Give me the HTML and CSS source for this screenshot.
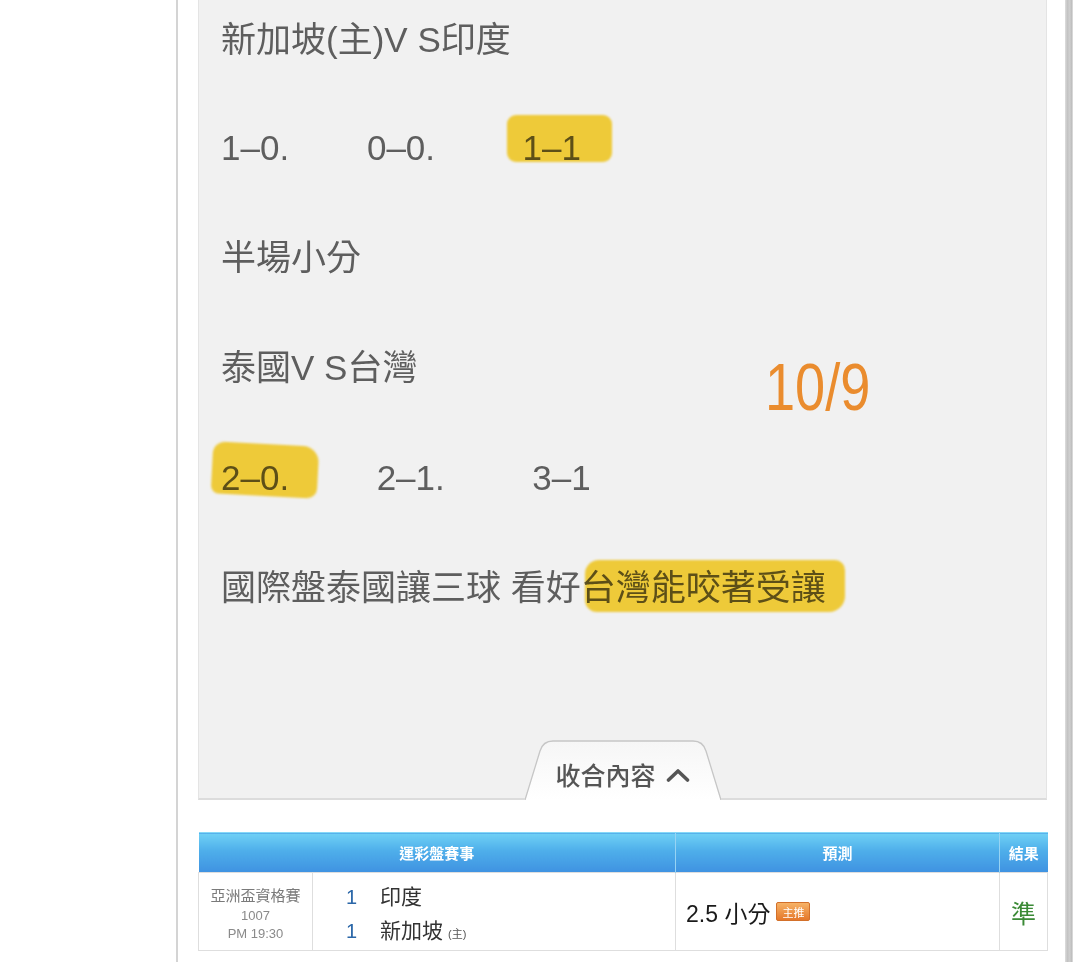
FILE: index.html
```html
<!DOCTYPE html>
<html lang="zh-Hant">
<head>
<meta charset="utf-8">
<title>賽事預測</title>
<link rel="stylesheet" href="styles.css">
</head>
<body>
<div class="frame">
  <main class="main">
    <article class="post">
      <p class="line">新加坡(主)V S印度</p>
      <p class="line scores">1–0.        0–0.         <span class="hl hl-a">1–1</span></p>
      <p class="line">半場小分</p>
      <p class="line">泰國V S台灣</p>
      <p class="line scores"><span class="hl hl-b">2–0.</span>         2–1.         3–1</p>
      <p class="line">國際盤泰國讓三球 看好<span class="hl hl-c">台灣能咬著受讓</span></p>
      <span class="note">10/9</span>
      <div class="post-foot">
        <button class="toggle" type="button">
          <svg class="tab-shape" viewBox="0 0 196 60" width="196" height="60" aria-hidden="true">
            <defs>
              <linearGradient id="tabfill" x1="0" y1="0" x2="0" y2="1">
                <stop offset="0" stop-color="#f6f6f6"/>
                <stop offset="1" stop-color="#ffffff"/>
              </linearGradient>
            </defs>
            <path d="M0 60 L15 11 Q18 1 28 1 L168 1 Q178 1 181 11 L196 60 Z" fill="url(#tabfill)"/>
            <path d="M0 60 L15 11 Q18 1 28 1 L168 1 Q178 1 181 11 L196 60" fill="none" stroke="#c6c6c6" stroke-width="1.3"/>
          </svg>
          <span class="toggle-label">收合內容</span>
          <svg class="chev" viewBox="0 0 24 14" width="24" height="14" aria-hidden="true">
            <polyline points="2.5,12 12,3 21.5,12" fill="none" stroke="#555" stroke-width="3.6" stroke-linecap="round" stroke-linejoin="round"/>
          </svg>
        </button>
      </div>
    </article>

    <table class="picks">
      <colgroup>
        <col class="c-league"><col class="c-teams"><col class="c-pred"><col class="c-res">
      </colgroup>
      <thead>
        <tr>
          <th colspan="2">運彩盤賽事</th>
          <th>預測</th>
          <th>結果</th>
        </tr>
      </thead>
      <tbody>
        <tr>
          <td class="league">
            <div class="lg-name">亞洲盃資格賽</div>
            <div class="lg-meta">1007</div>
            <div class="lg-meta">PM 19:30</div>
          </td>
          <td class="teams">
            <div class="team"><span class="num">1</span><span class="tname">印度</span></div>
            <div class="team"><span class="num">1</span><span class="tname">新加坡</span><span class="home">(主)</span></div>
          </td>
          <td class="pred">
            <span class="pred-text">2.5 小分</span><span class="badge">主推</span>
          </td>
          <td class="res">準</td>
        </tr>
      </tbody>
    </table>
  </main>
  <div class="scroll-edge"></div>
</div>
</body>
</html>
```

FILE: styles.css
```css
* { box-sizing: border-box; }

html, body {
  margin: 0;
  padding: 0;
  background: #ffffff;
}

body {
  font-family: "Liberation Sans", "Noto Sans CJK TC", sans-serif;
  color: #5e5e5e;
}

.frame {
  display: flex;
  margin-left: 176px;
  min-height: 962px;
}

.main {
  width: 889px;
  border-left: 2px solid #d4d4d4;
  padding: 0 18px 0 20px;
}

.scroll-edge {
  width: 8px;
  background: linear-gradient(to right, #dedede, #c3c3c3 30%, #cfcfcf 60%, #bfbfbf 82%, #e4e4e4);
}

/* ---------- article box ---------- */
.post {
  position: relative;
  display: flex;
  flex-direction: column;
  gap: 70px;
  background: #f1f1f1;
  border-left: 1px solid #e4e4e4;
  border-right: 1px solid #e4e4e4;
  border-bottom: 2px solid #dcdcdc;
  padding: 20px 0 0 22px;
}

.line {
  margin: 0;
  height: 40px;
  line-height: 40px;
  font-size: 35px;
  color: #5e5e5e;
  white-space: pre;
}

.line:first-child {
  margin-bottom: -2px;
}

.hl {
  position: relative;
  display: inline-block;
  line-height: 40px;
  height: 40px;
}

.hl::before {
  content: "";
  position: absolute;
  background: #fcd63c;
  mix-blend-mode: multiply;
  border-radius: 9px;
  filter: blur(0.8px);
  z-index: 1;
}

.hl-a::before { left: -16px; right: -31px; top: -13px; height: 47px; }
.hl-b::before { left: -9px; right: -29px; top: -14px; height: 52px; transform: rotate(3deg); border-radius: 12px 16px 10px 8px; }
.hl-c::before { left: 4px; right: -19px; top: -8px; height: 52px; border-radius: 14px 10px 16px 12px; }

.note {
  position: absolute;
  left: 566px;
  top: 354px;
  font-size: 66px;
  line-height: 1;
  color: #ea8c2e;
  transform: scaleX(0.82);
  transform-origin: left top;
}

.post-foot {
  display: flex;
  justify-content: center;
  margin-top: 62px;
  margin-left: -22px;
}

.toggle {
  position: relative;
  width: 196px;
  height: 60px;
  margin-bottom: -2px;
  padding: 8px 0 0 0;
  border: 0;
  background: none;
  display: flex;
  align-items: center;
  justify-content: center;
  gap: 10px;
  font-family: "Noto Sans CJK TC", sans-serif;
  font-size: 25px;
  font-weight: 500;
  color: #555555;
  cursor: pointer;
}

.tab-shape {
  position: absolute;
  left: 0;
  top: 0;
}

.toggle-label,
.chev {
  position: relative;
}

.toggle-label {
  line-height: 30px;
}

.chev {
  margin-top: 2px;
}

/* ---------- table ---------- */
.picks {
  width: 849px;
  margin-top: 32px;
  border-collapse: collapse;
  table-layout: fixed;
}

.c-league { width: 114px; }
.c-teams { width: 363px; }
.c-pred { width: 324px; }
.c-res { width: 48px; }

.picks th {
  height: 40px;
  padding: 0;
  color: #ffffff;
  font-size: 15px;
  font-weight: bold;
  text-align: center;
  background: linear-gradient(#6fd0f5 0%, #4eaeea 45%, #3f92e1 100%);
  border-left: 1px solid #97d3f3;
  border-top: 1px solid #86d8f7;
}

.picks th:first-child { border-left: 0; }

.picks td {
  height: 78px;
  padding: 0;
  border: 1px solid #dedede;
  background: #ffffff;
  vertical-align: middle;
}

.league {
  text-align: center;
  color: #808080;
  padding-top: 4px !important;
}

.lg-name {
  font-size: 15px;
  line-height: 22px;
  color: #7a7a7a;
}

.lg-meta {
  font-size: 13px;
  line-height: 18px;
  color: #8a8a8a;
}

.teams {
  padding: 4px 0 0 33px !important;
}

.team {
  display: flex;
  align-items: baseline;
  height: 34px;
  line-height: 34px;
}

.num {
  width: 34px;
  font-size: 20px;
  color: #2b67a8;
}

.tname {
  font-size: 21px;
  color: #333333;
}

.home {
  font-size: 11px;
  color: #555555;
  margin-left: 5px;
}

.pred {
  padding-left: 10px !important;
  color: #1a1a1a;
}

.pred-text {
  font-size: 23px;
  vertical-align: middle;
}

.badge {
  display: inline-block;
  vertical-align: middle;
  margin-left: 6px;
  width: 34px;
  height: 19px;
  line-height: 19px;
  text-align: center;
  font-family: "Noto Sans CJK TC", sans-serif;
  font-size: 11px;
  color: #ffffff;
  background: linear-gradient(#f6b266, #e5782b);
  border: 1px solid #d3702a;
  border-radius: 2px;
}

.res {
  text-align: center;
  font-size: 25px;
  color: #3b8a36;
}
```
